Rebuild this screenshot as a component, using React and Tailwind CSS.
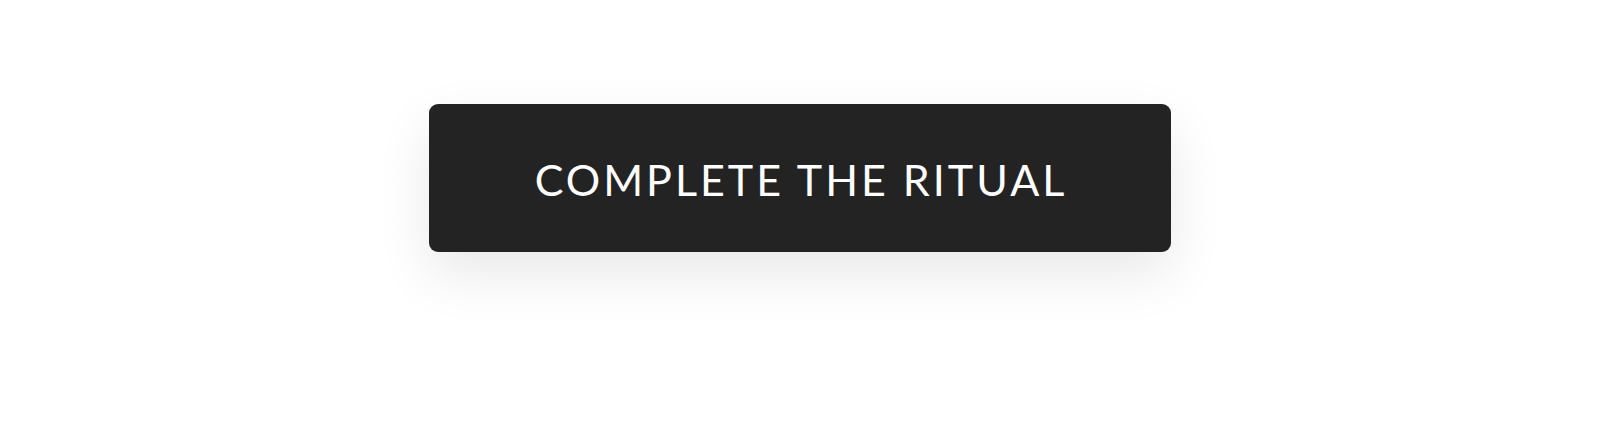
import React from "react";

// single call-to-action button
const App = () => {
  return (
    <div className="flex min-h-[421px] w-full justify-center bg-white pt-[104px]">
      <button
        type="button"
        className="flex h-[148px] w-[742px] items-center justify-center rounded-[9px] bg-[#232323] text-white shadow-[0_22px_55px_rgba(0,0,0,0.09)]"
      >
        <span className="font-['Lato',sans-serif] text-[43px] font-normal leading-none tracking-[3px] pl-[3px] pt-[2px]">
          COMPLETE THE RITUAL
        </span>
      </button>
    </div>
  );
};

export default App;
